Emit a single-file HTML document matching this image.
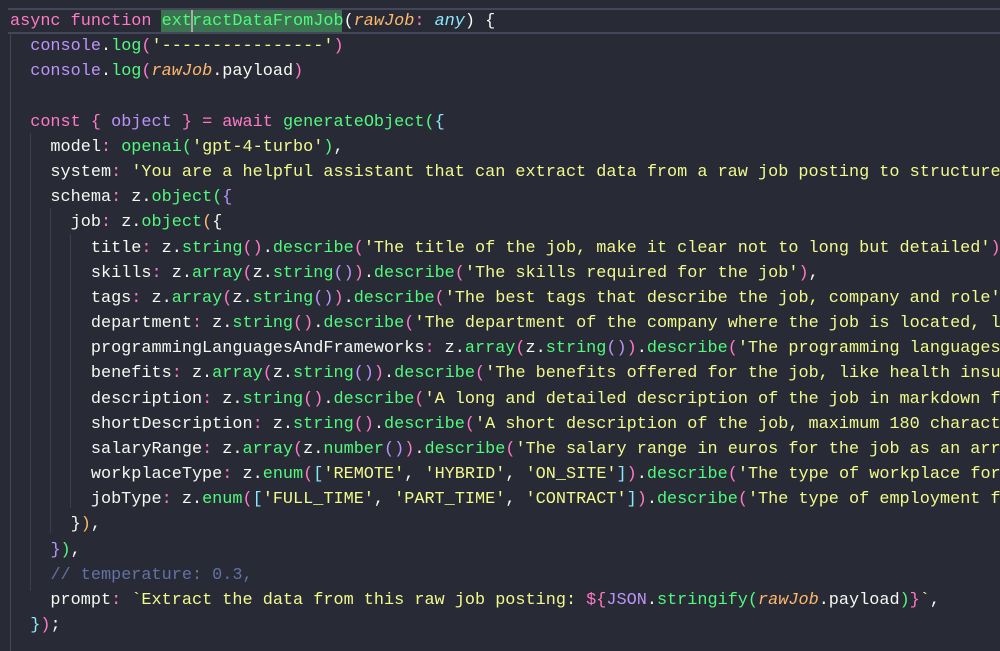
<!DOCTYPE html>
<html><head><meta charset="utf-8"><style>
body{margin:0;width:1000px;height:651px;background:#282a36;overflow:hidden;position:relative;font-family:"Liberation Mono",monospace;font-size:16.85px;color:#f8f8f2}
.l{position:absolute;left:10px;height:25.17px;line-height:25.17px;white-space:pre}
.k{color:#ff79c6}.f{color:#50fa7b}.p{color:#ffb86c;font-style:italic}.t{color:#8be9fd;font-style:italic}.s{color:#f1fa8c}.v{color:#bd93f9}.c{color:#6272a4}.cy{color:#8be9fd}.o{color:#ffb86c}
.g{position:absolute;width:1px;background:#3c3e4c}
#c{position:absolute;left:0;top:0;width:1000px;height:651px;overflow:hidden}
</style></head><body>
<div style="position:absolute;left:8px;top:8px;width:992px;height:22px;border-top:2px solid #44475a;border-bottom:2px solid #44475a"></div>
<div style="position:absolute;left:161px;top:10px;width:181px;height:22px;background:#3b7250"></div>
<div style="position:absolute;left:191px;top:10px;width:2px;height:22px;background:#aaa"></div>
<div class="g" style="left:10px;top:33px;height:618px;background:#44475a"></div>
<div class="g" style="left:30px;top:133px;height:458px"></div>
<div class="g" style="left:50px;top:208px;height:325px"></div>
<div class="g" style="left:70px;top:234px;height:274px"></div>
<div id="c"></div>
<script>
const L=[
'<span class="k">async</span> <span class="k">function</span> <span class="f">extractDataFromJob</span>(<span class="p">rawJob</span><span class="k">:</span> <span class="t">any</span>) {',
'  <span class="v">console</span>.<span class="f">log</span><span class="k">(</span><span class="s">\'----------------\'</span><span class="k">)</span>',
'  <span class="v">console</span>.<span class="f">log</span><span class="k">(</span><span class="p">rawJob</span>.payload<span class="k">)</span>',
'',
'  <span class="k">const</span> <span class="k">{</span> <span class="v">object</span> <span class="k">}</span> <span class="k">=</span> <span class="k">await</span> <span class="f">generateObject</span><span class="f">(</span><span class="cy">{</span>',
'    model<span class="k">:</span> <span class="f">openai</span><span class="f">(</span><span class="s">\'gpt-4-turbo\'</span><span class="f">)</span>,',
'    system<span class="k">:</span> <span class="s">\'You are a helpful assistant that can extract data from a raw job posting to structured data\'</span>,',
'    schema<span class="k">:</span> z.<span class="f">object</span><span class="f">(</span><span class="v">{</span>',
'      job<span class="k">:</span> z.<span class="f">object</span><span class="o">(</span>{',
'        title<span class="k">:</span> z.<span class="f">string</span><span class="k">()</span>.<span class="f">describe</span><span class="k">(</span><span class="s">\'The title of the job, make it clear not to long but detailed\'</span><span class="k">)</span>,',
'        skills<span class="k">:</span> z.<span class="f">array</span><span class="k">(</span>z.<span class="f">string</span><span class="v">()</span><span class="k">)</span>.<span class="f">describe</span><span class="k">(</span><span class="s">\'The skills required for the job\'</span><span class="k">)</span>,',
'        tags<span class="k">:</span> z.<span class="f">array</span><span class="k">(</span>z.<span class="f">string</span><span class="v">()</span><span class="k">)</span>.<span class="f">describe</span><span class="k">(</span><span class="s">\'The best tags that describe the job, company and role\'</span><span class="k">)</span>,',
'        department<span class="k">:</span> z.<span class="f">string</span><span class="k">()</span>.<span class="f">describe</span><span class="k">(</span><span class="s">\'The department of the company where the job is located, like\'</span><span class="k">)</span>,',
'        programmingLanguagesAndFrameworks<span class="k">:</span> z.<span class="f">array</span><span class="k">(</span>z.<span class="f">string</span><span class="v">()</span><span class="k">)</span>.<span class="f">describe</span><span class="k">(</span><span class="s">\'The programming languages\'</span>',
'        benefits<span class="k">:</span> z.<span class="f">array</span><span class="k">(</span>z.<span class="f">string</span><span class="v">()</span><span class="k">)</span>.<span class="f">describe</span><span class="k">(</span><span class="s">\'The benefits offered for the job, like health insurance\'</span>',
'        description<span class="k">:</span> z.<span class="f">string</span><span class="k">()</span>.<span class="f">describe</span><span class="k">(</span><span class="s">\'A long and detailed description of the job in markdown format\'</span>',
'        shortDescription<span class="k">:</span> z.<span class="f">string</span><span class="k">()</span>.<span class="f">describe</span><span class="k">(</span><span class="s">\'A short description of the job, maximum 180 characters\'</span>',
'        salaryRange<span class="k">:</span> z.<span class="f">array</span><span class="k">(</span>z.<span class="f">number</span><span class="v">()</span><span class="k">)</span>.<span class="f">describe</span><span class="k">(</span><span class="s">\'The salary range in euros for the job as an array\'</span>',
'        workplaceType<span class="k">:</span> z.<span class="f">enum</span><span class="k">(</span><span class="cy">[</span><span class="s">\'REMOTE\'</span>, <span class="s">\'HYBRID\'</span>, <span class="s">\'ON_SITE\'</span><span class="cy">]</span><span class="k">)</span>.<span class="f">describe</span><span class="k">(</span><span class="s">\'The type of workplace for\'</span>',
'        jobType<span class="k">:</span> z.<span class="f">enum</span><span class="k">(</span><span class="cy">[</span><span class="s">\'FULL_TIME\'</span>, <span class="s">\'PART_TIME\'</span>, <span class="s">\'CONTRACT\'</span><span class="cy">]</span><span class="k">)</span>.<span class="f">describe</span><span class="k">(</span><span class="s">\'The type of employment for\'</span>',
'      }<span class="o">)</span>,',
'    <span class="v">}</span><span class="f">)</span>,',
'    <span class="c">// temperature: 0.3,</span>',
'    prompt<span class="k">:</span> <span class="s">`Extract the data from this raw job posting: </span><span class="k">${</span><span class="v">JSON</span>.<span class="f">stringify</span><span class="f">(</span><span class="p">rawJob</span>.payload<span class="f">)</span><span class="k">}</span><span class="s">`</span>,',
'  <span class="cy">}</span><span class="k">)</span>;'
];
let h='';L.forEach((s,i)=>{h+='<div class="l" style="top:'+(9+i*25.17).toFixed(2)+'px">'+s+'</div>'});
document.getElementById('c').innerHTML=h;
</script>
</body></html>
